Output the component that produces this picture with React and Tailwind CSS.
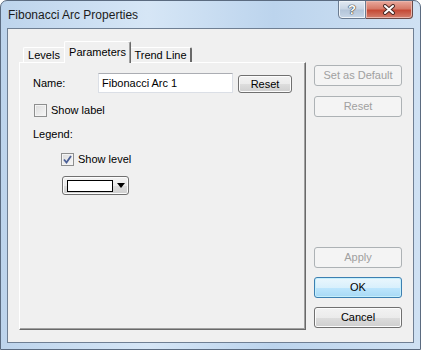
import React from 'react';

const btn = "h-[21px] w-[88px] flex items-center justify-center rounded-[3px] text-[11px]";
const normalBtn = "border border-[#707070] bg-[linear-gradient(#f2f2f2_0%,#ebebeb_50%,#dddddd_51%,#cfcfcf_100%)] shadow-[inset_0_0_0_1px_#fcfcfc] text-black";
const disabledBtn = "border border-[#adb2b5] bg-[#f4f4f4] text-[#a0a0a0]";

const Checkbox = ({ checked }) => (
    <div className="w-[13px] h-[13px] border border-[#8e8f8f] bg-[linear-gradient(135deg,#dcdcdc,#f7f7f7)] shadow-[inset_0_0_0_1px_#f4f4f4] flex items-center justify-center">
        {checked && (
            <svg width="9" height="9" viewBox="0 0 9 9">
                <path d="M1 4.5 L3.5 7.5 L8 1" fill="none" stroke="#4a5f97" strokeWidth="1.8" />
            </svg>
        )}
    </div>
);

const App = () => {
    return (
        <div className="w-[421px] h-[350px] flex flex-col border border-[#5b6b80] rounded-t-[7px] bg-[linear-gradient(to_right,#bdd4ec,#d6e6f6_35%,#bcd4ed_65%,#cfe1f3)] font-['Liberation_Sans',Arial,sans-serif] overflow-hidden">
            {/* Title bar */}
            <div className="h-[27px] flex items-start justify-between">
                <div className="pl-[7px] pt-[7px] text-[12px] leading-[15px] text-[#1b1b1b]">Fibonacci Arc Properties</div>
                <div className="flex mr-[7px] -mt-[1px]">
                    <div className="w-[28px] h-[19px] border border-[#6a7b90] rounded-bl-[4px] bg-[linear-gradient(#e2eaf3_0%,#c9d6e5_45%,#b4c5d9_55%,#c8d7e7_100%)] shadow-[inset_0_0_0_1px_#eef3f8] flex items-center justify-center">
                        <span className="text-[13px] font-bold leading-none text-white [text-shadow:0_0_1px_#333,0_0_1px_#333,0_0_1px_#333]">?</span>
                    </div>
                    <div className="w-[47px] h-[19px] border border-l-0 border-[#6a4a48] rounded-br-[4px] bg-[linear-gradient(#e9a99d_0%,#d67a68_45%,#c54a36_55%,#d3806e_100%)] shadow-[inset_0_0_0_1px_#eab6ac] flex items-center justify-center">
                        <svg width="14" height="11" viewBox="0 0 14 11">
                            <path d="M3 2 L11 9 M11 2 L3 9" stroke="#4a2a26" strokeWidth="4" strokeLinecap="round" />
                            <path d="M3 2 L11 9 M11 2 L3 9" stroke="#ffffff" strokeWidth="2" strokeLinecap="round" />
                        </svg>
                    </div>
                </div>
            </div>

            {/* Client area */}
            <div className="h-[315px] mx-[6px] border border-[#6f7f93] bg-[#f0f0f0] flex pl-[11px] pt-[12px] pb-[12px] text-[11px] leading-[13px] text-black">
                {/* Tabs + panel */}
                <div className="w-[287px] flex flex-col">
                    <div className="h-[21px] flex items-end pl-[4px]">
                        <div className="h-[15px] w-[41px] flex items-center justify-center border-t border-l border-white rounded-tl-[2px] pt-[1px]">Levels</div>
                        <div className="h-[22px] w-[67px] -mb-[1px] relative z-10 flex items-center justify-center bg-[#f0f0f0] border-t border-l border-white border-r border-r-[#696969] shadow-[inset_-1px_0_0_#a0a0a0] rounded-t-[2px] pb-[1px]">Parameters</div>
                        <div className="h-[15px] w-[61px] flex items-center justify-center border-t border-white border-r-2 border-r-[#696969] rounded-tr-[2px] pt-[1px]">Trend Line</div>
                    </div>
                    <div className="flex-1 border-t border-l border-white border-r border-b border-r-[#696969] border-b-[#696969] shadow-[inset_-1px_-1px_0_#a0a0a0] flex flex-col pt-[10px] pl-[13px]">
                        <div className="flex items-center h-[20px]">
                            <div className="w-[65px]">Name:</div>
                            <div className="w-[135px] h-[20px] bg-white border border-[#dbdfe6] border-t-[#abadb3] flex items-center pl-[3px]">Fibonacci Arc 1</div>
                            <div className={`ml-[5px] w-[54px] h-[18px] mt-[2px] flex items-center justify-center rounded-[3px] ${normalBtn}`}>Reset</div>
                        </div>
                        <div className="flex items-center mt-[11px] pl-[1px]">
                            <Checkbox />
                            <span className="ml-[4px]">Show label</span>
                        </div>
                        <div className="mt-[11px]">Legend:</div>
                        <div className="flex items-center mt-[12px] pl-[28px]">
                            <Checkbox checked />
                            <span className="ml-[4px]">Show level</span>
                        </div>
                        <div className="mt-[10px] ml-[29px] w-[67px] h-[19px] rounded-[3px] border border-[#707070] bg-[linear-gradient(#f2f2f2_0%,#ebebeb_50%,#dddddd_51%,#cfcfcf_100%)] shadow-[inset_0_0_0_1px_#fcfcfc] flex items-center pl-[4px]">
                            <div className="w-[46px] h-[12px] bg-white border border-black" />
                            <svg className="ml-[4px]" width="8" height="5" viewBox="0 0 8 5">
                                <path d="M0 0 H8 L4 5 Z" fill="#000" />
                            </svg>
                        </div>
                    </div>
                </div>

                {/* Right buttons */}
                <div className="ml-[8px] w-[88px] flex flex-col justify-between pt-[24px] pb-[2px]">
                    <div className="flex flex-col gap-[10px]">
                        <div className={`${btn} ${disabledBtn}`}>Set as Default</div>
                        <div className={`${btn} ${disabledBtn}`}>Reset</div>
                    </div>
                    <div className="flex flex-col gap-[9px]">
                        <div className={`${btn} ${disabledBtn}`}>Apply</div>
                        <div className={`${btn} border border-[#3c7fb1] bg-[linear-gradient(#eaf6fd_0%,#d9f0fc_50%,#bee6fd_51%,#a7d9f5_100%)] shadow-[inset_0_0_0_1px_#c5effc]`}>OK</div>
                        <div className={`${btn} ${normalBtn}`}>Cancel</div>
                    </div>
                </div>
            </div>
        </div>
    );
};

export default App;
